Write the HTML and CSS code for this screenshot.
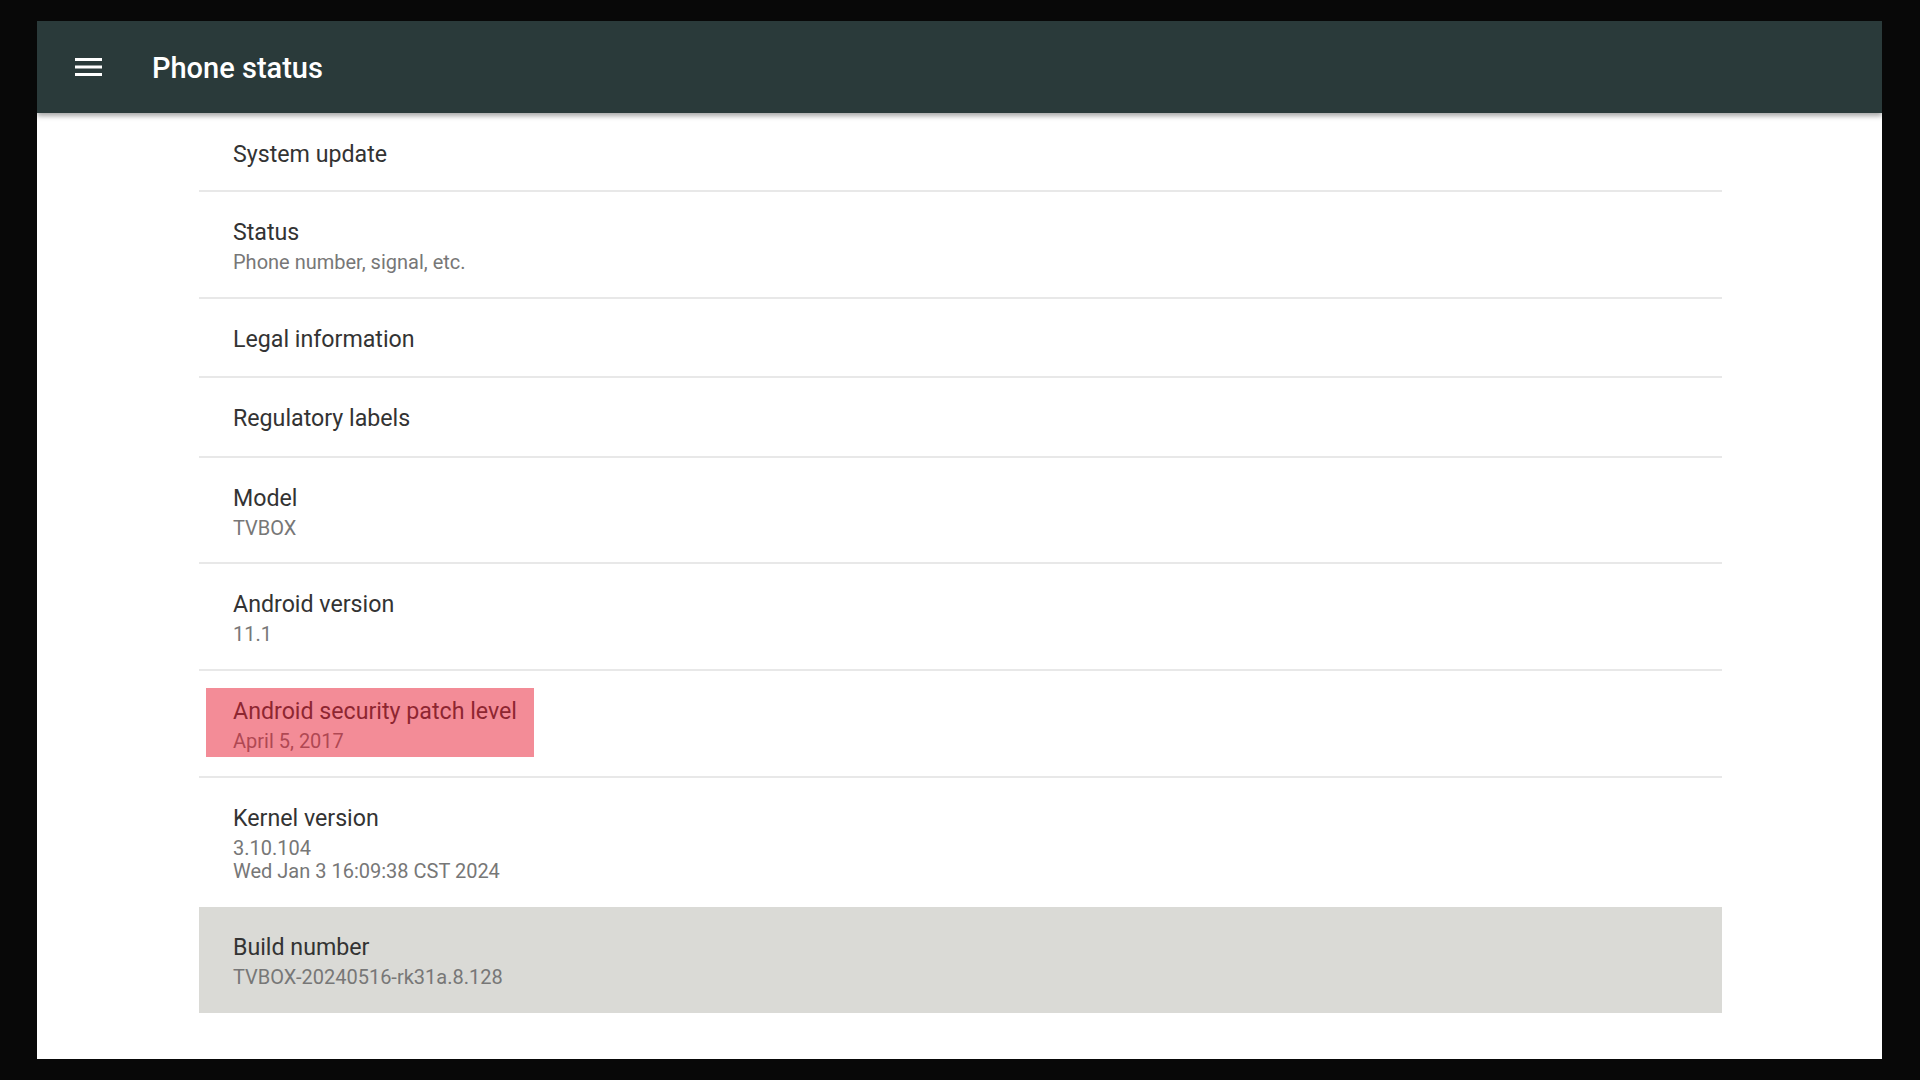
FILE: index.html
```html
<!DOCTYPE html>
<html lang="en">
  <head>
    <meta charset="UTF-8" />
    <meta name="viewport" content="width=device-width, initial-scale=1.0" />
    <title>Phone status</title>
    <link rel="stylesheet" href="styles.css">
  </head>
  <body>
    <div class="screen">
      <div class="toolbar">
        <svg class="menu-icon" width="27" height="18" viewBox="0 0 27 18">
          <rect x="0" y="0" width="27" height="3" fill="#fff" />
          <rect x="0" y="7.5" width="27" height="3" fill="#fff" />
          <rect x="0" y="15" width="27" height="3" fill="#fff" />
        </svg>
        <h1 class="toolbar-title">Phone status</h1>
      </div>

      <div class="list">
        <div class="item first">
          <div class="title">System update</div>
        </div>
        <div class="item">
          <div class="title">Status</div>
          <div class="summary">Phone number, signal, etc.</div>
        </div>
        <div class="item">
          <div class="title">Legal information</div>
        </div>
        <div class="item">
          <div class="title">Regulatory labels</div>
        </div>
        <div class="item">
          <div class="title">Model</div>
          <div class="summary">TVBOX</div>
        </div>
        <div class="item">
          <div class="title">Android version</div>
          <div class="summary">11.1</div>
        </div>
        <div class="item">
          <div class="title">Android security patch level</div>
          <div class="summary">April 5, 2017</div>
          <!-- 高亮框 -->
          <span class="highlight"></span>
        </div>
        <div class="item no-divider">
          <div class="title">Kernel version</div>
          <div class="summary">3.10.104<br>Wed Jan 3 16:09:38 CST 2024</div>
        </div>
        <div class="item selected">
          <div class="title">Build number</div>
          <div class="summary">TVBOX-20240516-rk31a.8.128</div>
        </div>
      </div>
    </div>
  </body>
</html>
```

FILE: styles.css
```css
body {
  margin: 0;
  height: 1080px;
  background-color: #080808;
  overflow: hidden;
  font-family: Roboto, "Liberation Sans", sans-serif;
}
.screen {
  margin: 21px 0 0 37px;
  width: 1845px;
  height: 1038px;
  background-color: #fff;
  overflow: hidden;
}
.toolbar {
  position: relative;
  z-index: 1;
  height: 92px;
  display: flex;
  align-items: center;
  background-color: #2a3a3a;
  box-shadow: 0 3px 5px rgba(0, 0, 0, 0.35);
}
.menu-icon {
  margin-left: 38px;
}
.toolbar-title {
  margin: 2px 0 0 50px;
  color: #fff;
  font-size: 29px;
  font-weight: 500;
}
.list {
  margin: 0 160px 0 162px;
}
.item {
  position: relative;
  padding: 25px 0 22.6px 34px;
  border-bottom: 2px solid #e8e8e8;
}
.item.first {
  padding-top: 26px;
  padding-bottom: 21px;
}
.item.no-divider {
  border-bottom-color: transparent;
}
.item.selected {
  border-bottom: none;
  padding-bottom: 24px;
  background-color: #dadad6;
}
.title {
  font-size: 23.2px;
  line-height: 30px;
  color: #333;
}
.summary {
  margin-top: 4px;
  font-size: 20px;
  line-height: 23px;
  color: #777;
}
.highlight {
  position: absolute;
  left: 7px;
  top: 17px;
  width: 328px;
  height: 69px;
  background-color: rgba(232, 26, 48, 0.5);
}
```
